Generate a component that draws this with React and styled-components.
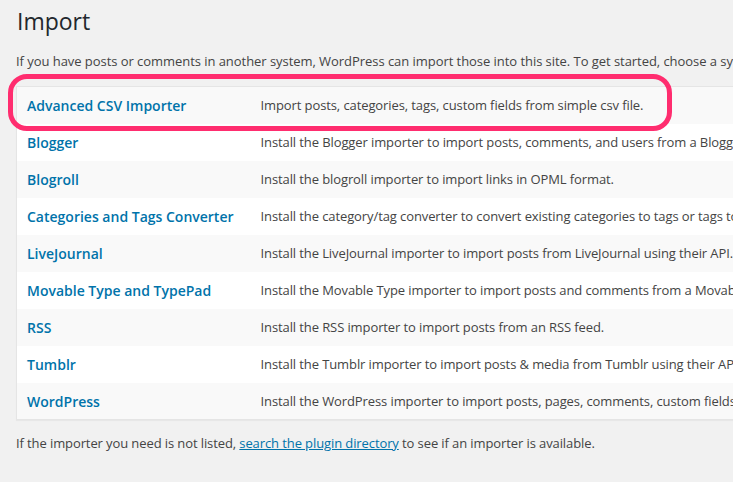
import React from "react";
import styled, { createGlobalStyle } from "styled-components";

const importers = [
  ["Advanced CSV Importer", "Import posts, categories, tags, custom fields from simple csv file."],
  ["Blogger", "Install the Blogger importer to import posts, comments, and users from a Blogger blog."],
  ["Blogroll", "Install the blogroll importer to import links in OPML format."],
  ["Categories and Tags Converter", "Install the category/tag converter to convert existing categories to tags or tags to categories, selectively."],
  ["LiveJournal", "Install the LiveJournal importer to import posts from LiveJournal using their API."],
  ["Movable Type and TypePad", "Install the Movable Type importer to import posts and comments from a Movable Type or TypePad blog."],
  ["RSS", "Install the RSS importer to import posts from an RSS feed."],
  ["Tumblr", "Install the Tumblr importer to import posts & media from Tumblr using their API."],
  ["WordPress", "Install the WordPress importer to import posts, pages, comments, custom fields, categories, and tags from a WordPress export file."],
];

function App() {
  return (
    <>
      <GlobalStyle />
      <Page>
        <Title>Import</Title>
        <Intro>
          If you have posts or comments in another system, WordPress can import those into this site. To get started, choose a system to import from below:
        </Intro>
        <TableWrap>
          <Highlight />
          <Table>
            <colgroup>
              <col style={{ width: 234 }} />
              <col />
            </colgroup>
            <tbody>
              {importers.map(([name, desc], i) => (
                <Row key={name} $alt={i % 2 === 0}>
                  <NameCell>
                    <NameLink href="#">{name}</NameLink>
                  </NameCell>
                  <DescCell>{desc}</DescCell>
                </Row>
              ))}
            </tbody>
          </Table>
        </TableWrap>
        <Footer>
          If the importer you need is not listed, <FooterLink href="#">search the plugin directory</FooterLink> to see if an importer is available.
        </Footer>
      </Page>
    </>
  );
}

export default App;

const GlobalStyle = createGlobalStyle`
  html, body {
    margin: 0;
    background: #f1f1f1;
    overflow: hidden;
  }
  body {
    font-family: "Open Sans", "Noto Sans", sans-serif;
    color: #444;
    -webkit-font-smoothing: antialiased;
  }
`;

const Page = styled.div`
  width: 733px;
  height: 482px;
  padding: 0 0 0 16px;
  box-sizing: border-box;
  overflow: hidden;
`;

const Title = styled.h1`
  margin: 0;
  padding: 7px 0 0 1px;
  font-size: 23px;
  font-weight: 400;
  line-height: 29px;
  color: #23282d;
`;

const Intro = styled.p`
  margin: 16px 0 0;
  font-size: 13px;
  line-height: 19px;
  white-space: nowrap;
  letter-spacing: -0.05px;
`;

const TableWrap = styled.div`
  position: relative;
  margin-top: 15px;
  width: 1100px;
`;

const Highlight = styled.div`
  position: absolute;
  left: -8px;
  top: -12px;
  width: 664px;
  height: 57px;
  border: 5px solid #ff2d6f;
  border-radius: 19px;
  box-sizing: border-box;
  pointer-events: none;
  z-index: 2;
`;

const Table = styled.table`
  width: 100%;
  table-layout: fixed;
  border-collapse: collapse;
  background: #fff;
  border: 1px solid #e5e5e5;
  box-shadow: 0 1px 1px rgba(0, 0, 0, 0.04);
`;

const Row = styled.tr`
  height: 37px;
  background: ${(p) => (p.$alt ? "#f9f9f9" : "#fff")};
`;

const NameCell = styled.td`
  padding: 0 10px;
  vertical-align: middle;
`;

const NameLink = styled.a`
  font-size: 14px;
  font-weight: 600;
  color: #0073aa;
  text-decoration: none;
  white-space: nowrap;
`;

const DescCell = styled.td`
  padding: 0 10px;
  font-size: 13px;
  color: #444;
  white-space: nowrap;
  overflow: hidden;
  letter-spacing: -0.1px;
  vertical-align: middle;
`;

const Footer = styled.p`
  margin: 14px 0 0;
  font-size: 13px;
  line-height: 19px;
  white-space: nowrap;
  letter-spacing: -0.1px;
`;

const FooterLink = styled.a`
  color: #0073aa;
  text-decoration: underline;
`;
